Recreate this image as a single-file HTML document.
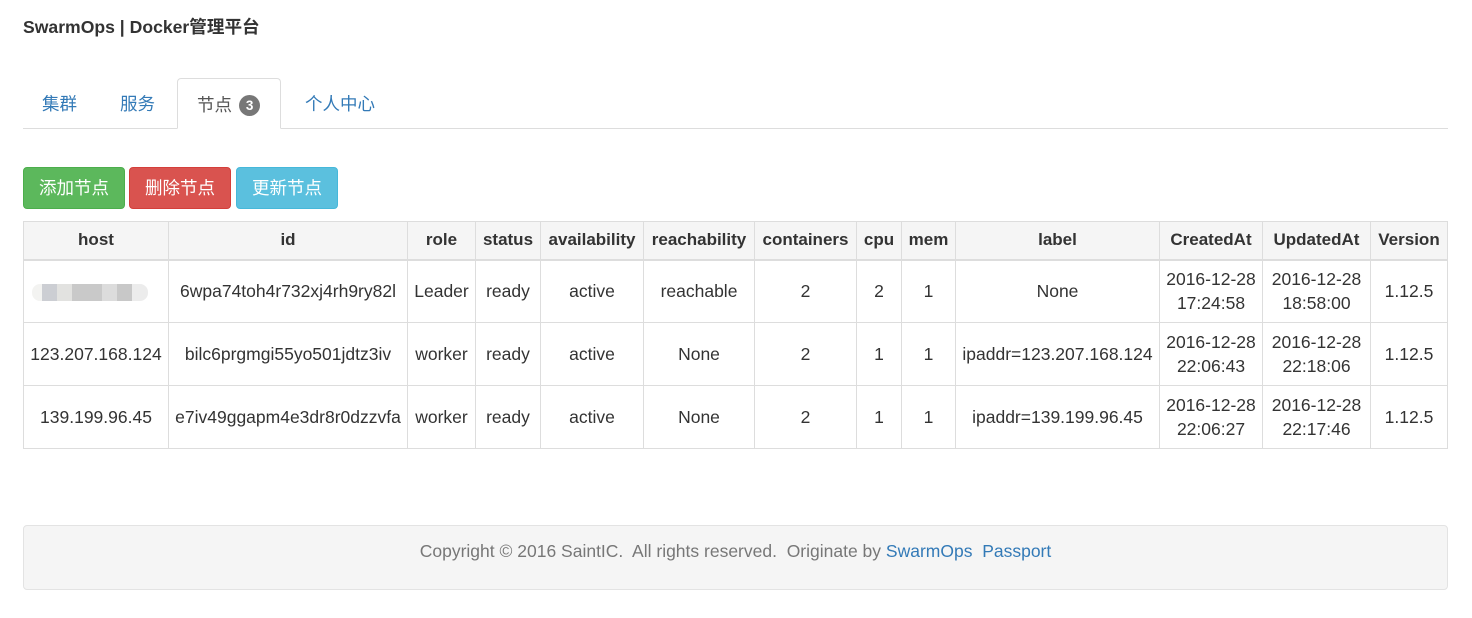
<!DOCTYPE html>
<html><head><meta charset="utf-8"><style>
*{box-sizing:border-box}
body{margin:0;background:#fff;font-family:"Liberation Sans","Noto Sans CJK SC",sans-serif;color:#333;font-size:16px;width:1472px;height:618px;overflow:hidden;position:relative}
.title{position:absolute;left:23px;top:14px;font-weight:bold;font-size:17.6px}
.tabs{position:absolute;left:23px;top:78px;width:1425px;height:51px;border-bottom:1px solid #ddd}
.tab{position:absolute;top:0;height:51px;line-height:52px;color:#337ab7;font-size:17.5px}
.tab.active{border:1px solid #ddd;border-bottom-color:#fff;border-radius:4px 4px 0 0;background:#fff;color:#555;height:51px;top:0}
.badge{display:inline-block;background:#777;color:#fff;font-size:13.5px;font-weight:bold;border-radius:11px;padding:2px 7px;line-height:17px;vertical-align:1px;margin-left:2px}
.btn{position:absolute;top:167px;height:42px;line-height:40px;width:102px;text-align:center;color:#fff;border-radius:4px;font-size:17.5px;border:1px solid}
table{position:absolute;left:23px;top:221px;border-collapse:collapse;width:1425px;table-layout:fixed}
td,th{border:1px solid #ddd;text-align:center;vertical-align:middle;padding:0 2px;line-height:24px;white-space:nowrap;overflow:hidden}
th{background:#f5f5f5;height:38px;border-bottom:2px solid #ddd;font-weight:bold;font-size:17px}
td{height:63px;font-size:17.5px}
.foot{position:absolute;left:23px;top:525px;width:1425px;height:65px;background:#f5f5f5;border:1px solid #e3e3e3;border-radius:4px;text-align:center;line-height:50px;color:#777;font-size:17.5px}
.foot a{color:#337ab7;text-decoration:none}
.blur{display:inline-block;width:116px;height:17px;border-radius:8px;background:linear-gradient(90deg,#f3f3f1 0,#f3f3f1 10px,#ccced3 10px,#ccced3 25px,#e2e2e0 25px,#e2e2e0 40px,#c9c9c9 40px,#c9c9c9 70px,#dcdcdc 70px,#dcdcdc 85px,#c8c8c8 85px,#c8c8c8 100px,#ececec 100px);vertical-align:middle;margin-left:-12px}
</style></head><body>
<div class="title">SwarmOps | Docker管理平台</div>
<div class="tabs">
<div class="tab" style="left:19px">集群</div>
<div class="tab" style="left:97px">服务</div>
<div class="tab active" style="left:154px;width:104px;padding-left:19px">节点 <span class="badge">3</span></div>
<div class="tab" style="left:282px">个人中心</div>
</div>
<div class="btn" style="left:23px;background:#5cb85c;border-color:#4cae4c">添加节点</div>
<div class="btn" style="left:129px;background:#d9534f;border-color:#d43f3a">删除节点</div>
<div class="btn" style="left:236px;background:#5bc0de;border-color:#46b8da">更新节点</div>
<table>
<colgroup><col style="width:145px"><col style="width:239px"><col style="width:68px"><col style="width:65px"><col style="width:103px"><col style="width:111px"><col style="width:102px"><col style="width:45px"><col style="width:54px"><col style="width:204px"><col style="width:103px"><col style="width:108px"><col style="width:77px"></colgroup>
<tr><th>host</th><th>id</th><th>role</th><th>status</th><th>availability</th><th>reachability</th><th>containers</th><th>cpu</th><th>mem</th><th>label</th><th>CreatedAt</th><th>UpdatedAt</th><th>Version</th></tr>
<tr><td><span class="blur"></span></td><td>6wpa74toh4r732xj4rh9ry82l</td><td>Leader</td><td>ready</td><td>active</td><td>reachable</td><td>2</td><td>2</td><td>1</td><td>None</td><td>2016-12-28<br>17:24:58</td><td>2016-12-28<br>18:58:00</td><td>1.12.5</td></tr>
<tr><td>123.207.168.124</td><td>bilc6prgmgi55yo501jdtz3iv</td><td>worker</td><td>ready</td><td>active</td><td>None</td><td>2</td><td>1</td><td>1</td><td>ipaddr=123.207.168.124</td><td>2016-12-28<br>22:06:43</td><td>2016-12-28<br>22:18:06</td><td>1.12.5</td></tr>
<tr><td>139.199.96.45</td><td>e7iv49ggapm4e3dr8r0dzzvfa</td><td>worker</td><td>ready</td><td>active</td><td>None</td><td>2</td><td>1</td><td>1</td><td>ipaddr=139.199.96.45</td><td>2016-12-28<br>22:06:27</td><td>2016-12-28<br>22:17:46</td><td>1.12.5</td></tr>
</table>
<div class="foot">Copyright © 2016 SaintIC.&nbsp; All rights reserved.&nbsp; Originate by <a>SwarmOps</a>&nbsp; <a>Passport</a></div>
</body></html>
